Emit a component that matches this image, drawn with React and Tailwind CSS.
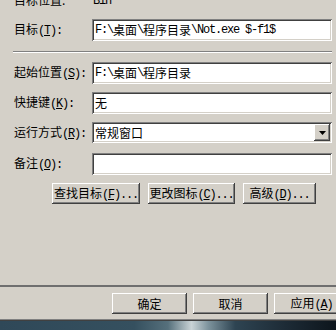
import React from "react";

const sunken =
  "bg-white shadow-[inset_1px_1px_#808080,inset_-1px_-1px_#ffffff,inset_2px_2px_#404040,inset_-2px_-2px_#d4d0c8]";
const raised =
  "bg-[#d4d0c8] shadow-[inset_-1px_-1px_#404040,inset_1px_1px_#ffffff,inset_-2px_-2px_#808080,inset_2px_2px_#d4d0c8]";

// half-width latin, like the old 12px bitmap font
const A = ({ children }) => (
  <span className="font-['Liberation_Mono',monospace] tracking-[-1.2px]">{children}</span>
);

const Mixed = ({ text }) => {
  const parts = text.split(/([\x20-\x7e]+)/);
  return (
    <>
      {parts.map((p, i) => (i % 2 ? <A key={i}>{p}</A> : <span key={i}>{p}</span>))}
    </>
  );
};

const Label = ({ name, k, tail = "):" }) => (
  <span className="whitespace-nowrap">
    {name}
    <A>
      (<span className="underline">{k}</span>
      {tail}
    </A>
  </span>
);

const Row = ({ label, children, className = "" }) => (
  <div className={"flex items-center " + className}>
    <div className="w-[78px] shrink-0">{label}</div>
    {children}
  </div>
);

const Field = ({ value, h = "h-[22px]" }) => (
  <div className={`${sunken} ${h} flex-1 flex items-center pl-[3px] whitespace-nowrap overflow-hidden`}>
    {value && <Mixed text={value} />}
  </div>
);

const Button = ({ w, children }) => (
  <button className={`${raised} ${w} h-[21px] flex items-center justify-center whitespace-nowrap`}>
    {children}
  </button>
);

export default function App() {
  return (
    <div className="w-[336px] h-[330px] overflow-hidden bg-[#d4d0c8] flex flex-col text-[12px] leading-[14px] text-black font-['Noto_Sans_CJK_SC',sans-serif]">
      <div className="pl-[14px] pr-[4px]">
        <Row label="目标位置:" className="-mt-[6px] h-[12px]">
          <span className="pl-[1px]">
            <A>Bin</A>
          </span>
        </Row>

        <Row label={<Label name="目标" k="T" />} className="mt-[13px]">
          <Field value="F:\桌面\程序目录\Not.exe $-f1$" />
        </Row>

        <div className="mt-[10px] -ml-[1px] h-[2px] border-t border-[#808080] border-b-white border-b" />

        <Row label={<Label name="起始位置" k="S" />} className="mt-[9px]">
          <Field value="F:\桌面\程序目录" />
        </Row>

        <Row label={<Label name="快捷键" k="K" />} className="mt-[8px]">
          <Field value="无" />
        </Row>

        <Row label={<Label name="运行方式" k="R" />} className="mt-[8px]">
          <div className={`${sunken} h-[21px] flex-1 flex items-center pl-[3px] pr-[2px]`}>
            <span className="flex-1">常规窗口</span>
            <div className={`${raised} w-[16px] h-[17px] flex items-center justify-center`}>
              <svg width="7" height="4" viewBox="0 0 7 4">
                <path d="M0 0h7L3.5 4z" fill="#000" />
              </svg>
            </div>
          </div>
        </Row>

        <Row label={<Label name="备注" k="O" />} className="mt-[10px]">
          <Field />
        </Row>

        <div className="mt-[8px] ml-[38px] flex gap-[8px]">
          <Button w="w-[88px]">
            <Label name="查找目标" k="F" tail=")..." />
          </Button>
          <Button w="w-[87px]">
            <Label name="更改图标" k="C" tail=")..." />
          </Button>
          <Button w="w-[73px]">
            <Label name="高级" k="D" tail=")..." />
          </Button>
        </div>
      </div>

      <div className="mt-[81px] h-[2px] bg-[#6f6f6f]" />

      <div className="mt-[6px] ml-[112px] flex gap-[6px]">
        <Button w="w-[75px] shrink-0">确定</Button>
        <Button w="w-[75px] shrink-0">取消</Button>
        <Button w="w-[75px] shrink-0">
          <span>
            应用<A>(<span className="underline">A</span>)</A>
          </span>
        </Button>
      </div>

      <div className="mt-[5px] h-[1px] bg-[#808080]" />
      <div className="h-[1px] bg-[#404040]" />
      <div className="flex-1 bg-[linear-gradient(90deg,#2f4858_0%,#35505f_40%,#56707c_50%,#c9d3d6_57%,#7d939d_62%,#2e4452_70%,#1d2b36_85%,#0d151c_100%)]" />
    </div>
  );
}
